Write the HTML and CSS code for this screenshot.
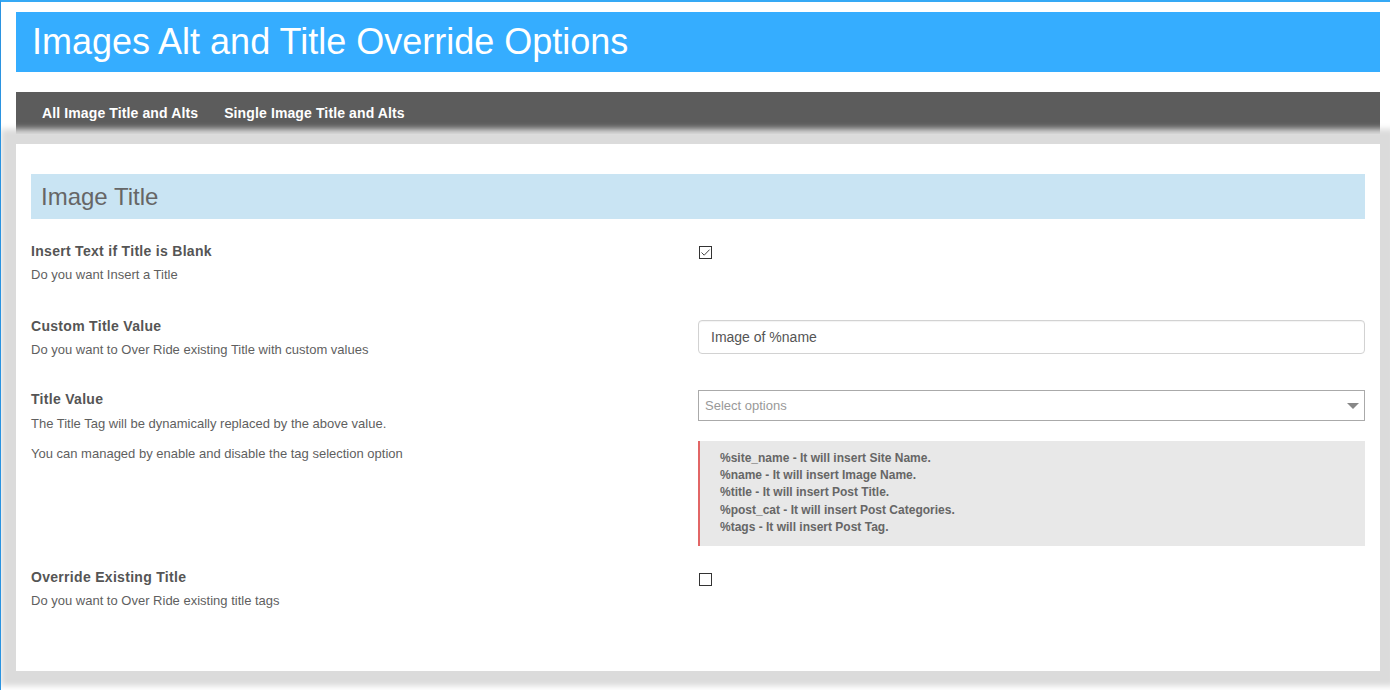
FILE: index.html
```html
<!DOCTYPE html>
<html lang="en">
<head>
<meta charset="utf-8">
<title>Images Alt and Title Override Options</title>
<link rel="stylesheet" href="styles.css">
</head>
<body>
<div class="frame">
  <header class="page-header">
    <h1 class="page-title">Images Alt and Title Override Options</h1>
  </header>
  <nav class="tabs">
    <a class="tab" href="#">All Image Title and Alts</a>
    <a class="tab" href="#">Single Image Title and Alts</a>
  </nav>
  <main class="card">
    <h2 class="section-title">Image Title</h2>

    <div class="row">
      <div class="field-info">
        <div class="label">Insert Text if Title is Blank</div>
        <div class="desc">Do you want Insert a Title</div>
      </div>
      <div class="field-control">
        <span class="checkbox">
          <svg width="11" height="11" viewBox="0 0 11 11"><path d="M1.5 5.5 L4.2 8.2 L9.6 2.6" fill="none" stroke="#444" stroke-width="1"/></svg>
        </span>
      </div>
    </div>

    <div class="row">
      <div class="field-info">
        <div class="label">Custom Title Value</div>
        <div class="desc">Do you want to Over Ride existing Title with custom values</div>
      </div>
      <div class="field-control">
        <div class="text-input">Image of %name</div>
      </div>
    </div>

    <div class="row row-select">
      <div class="field-info">
        <div class="label">Title Value</div>
        <div class="desc desc-wide">The Title Tag will be dynamically replaced by the above value.</div>
        <div class="desc desc-extra">You can managed by enable and disable the tag selection option</div>
      </div>
      <div class="field-control">
        <div class="select">
          <span class="placeholder">Select options</span>
          <span class="arrow"></span>
        </div>
        <div class="note">
          <div>%site_name - It will insert Site Name.</div>
          <div>%name - It will insert Image Name.</div>
          <div>%title - It will insert Post Title.</div>
          <div>%post_cat - It will insert Post Categories.</div>
          <div>%tags - It will insert Post Tag.</div>
        </div>
      </div>
    </div>

    <div class="row row-compact">
      <div class="field-info">
        <div class="label">Override Existing Title</div>
        <div class="desc">Do you want to Over Ride existing title tags</div>
      </div>
      <div class="field-control">
        <span class="checkbox"></span>
      </div>
    </div>
  </main>
</div>
</body>
</html>
```
FILE: styles.css
```css
html, body {
  margin: 0;
  padding: 0;
  background: #ffffff;
  font-family: "Liberation Sans", Arial, sans-serif;
}

.frame {
  box-sizing: border-box;
  min-height: 100vh;
  border-top: 2px solid #35a9f5;
  border-left: 1px solid #2b93e0;
  padding: 10px 10px 10px 15px;
  overflow: hidden;
}

.page-header {
  background: #35adff;
  height: 60px;
  padding-left: 16px;
}

.page-title {
  margin: 0;
  font-size: 36px;
  font-weight: normal;
  line-height: 60px;
  color: #ffffff;
}

.tabs {
  margin-top: 20px;
  height: 42px;
  background: #5c5c5c;
  display: flex;
  align-items: center;
  padding-left: 13px;
}

.tab {
  padding: 0 13px;
  color: #ffffff;
  font-size: 14px;
  font-weight: bold;
  letter-spacing: 0.12px;
  text-decoration: none;
  line-height: 42px;
}

.card {
  display: block;
  margin-top: 10px;
  background: #ffffff;
  box-shadow: 0 0 6px 15px #dbdbdb;
  padding: 30px 15px 61px;
  color: #555555;
}

.section-title {
  margin: 0 0 23px;
  height: 45px;
  line-height: 45px;
  background: #c9e4f3;
  padding-left: 10px;
  font-size: 24px;
  font-weight: normal;
  color: #666666;
}

.row {
  display: grid;
  grid-template-columns: 1fr 1fr;
  align-items: start;
}

.row + .row {
  margin-top: 33px;
}

.row + .row-select {
  margin-top: 31px;
}

.row + .row-compact {
  margin-top: 22px;
}

.label {
  font-size: 14px;
  font-weight: bold;
  letter-spacing: 0.3px;
  line-height: 18px;
  color: #555555;
}

.desc {
  margin-top: 6px;
  font-size: 13px;
  line-height: 18px;
  color: #5f5f5f;
}

.desc-wide {
  margin-top: 7px;
}

.desc-extra {
  margin-top: 12px;
}

.field-control {
  display: flex;
  flex-direction: column;
  align-items: stretch;
}

.checkbox {
  box-sizing: border-box;
  width: 13px;
  height: 13px;
  margin: 4px 0 0 1px;
  border: 1px solid #333333;
  background: #ffffff;
  display: flex;
  align-items: center;
  justify-content: center;
}

.row-compact .checkbox {
  margin-top: 5px;
}

.text-input {
  box-sizing: border-box;
  margin-top: 3px;
  height: 34px;
  border: 1px solid #d2d2d2;
  border-radius: 4px;
  box-shadow: inset 0 1px 1px rgba(0, 0, 0, 0.05);
  padding: 0 12px;
  font-size: 14px;
  line-height: 32px;
  color: #555555;
}

.select {
  box-sizing: border-box;
  height: 31px;
  border: 1px solid #aaaaaa;
  background: #ffffff;
  display: flex;
  align-items: center;
  justify-content: space-between;
  padding: 0 5px 0 6px;
}

.placeholder {
  font-size: 13px;
  color: #999999;
}

.arrow {
  width: 0;
  height: 0;
  border-left: 6px solid transparent;
  border-right: 6px solid transparent;
  border-top: 6px solid #888888;
  margin-top: 1px;
}

.note {
  margin-top: 20px;
  background: #e8e8e8;
  border-left: 2px solid #e26666;
  padding: 9px 20px 10px;
  font-size: 12px;
  font-weight: bold;
  line-height: 17.2px;
  color: #666666;
}
```
